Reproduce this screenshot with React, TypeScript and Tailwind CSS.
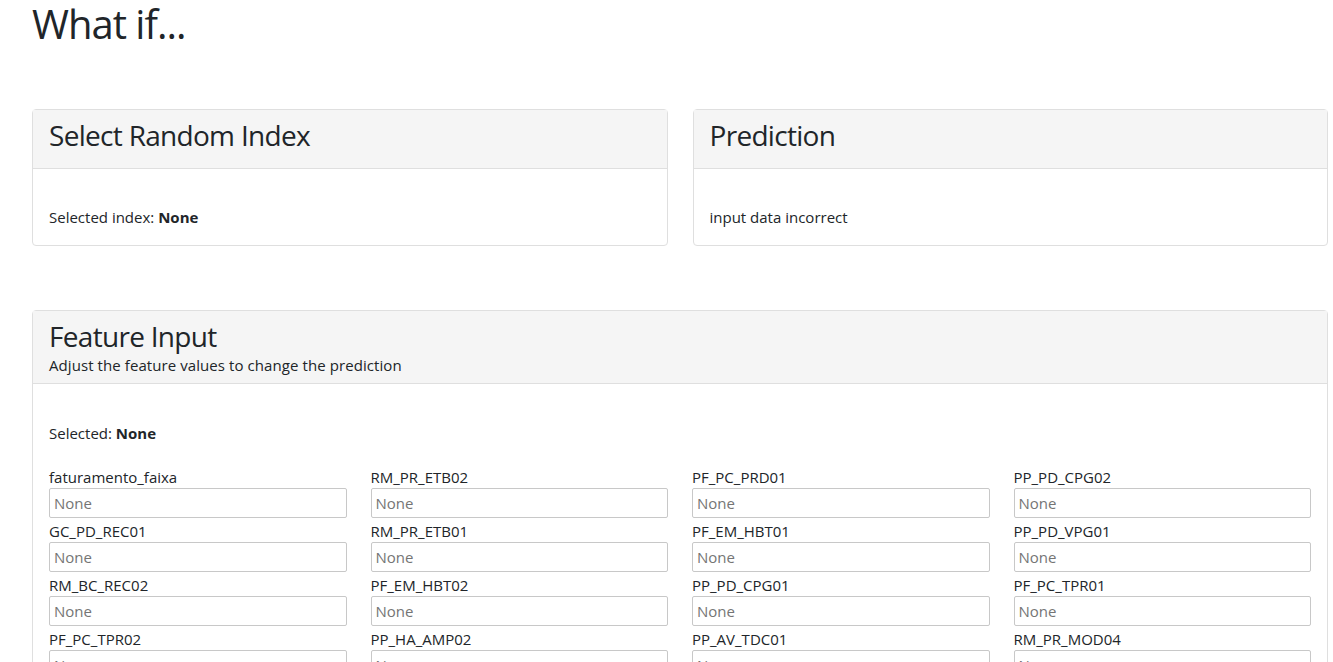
const features = [
  'faturamento_faixa',
  'RM_PR_ETB02',
  'PF_PC_PRD01',
  'PP_PD_CPG02',
  'GC_PD_REC01',
  'RM_PR_ETB01',
  'PF_EM_HBT01',
  'PP_PD_VPG01',
  'RM_BC_REC02',
  'PF_EM_HBT02',
  'PP_PD_CPG01',
  'PF_PC_TPR01',
  'PF_PC_TPR02',
  'PP_HA_AMP02',
  'PP_AV_TDC01',
  'RM_PR_MOD04',
  'RM_PR_MOD01',
  'PF_EM_HBT03',
  'PP_PD_VPG02',
  'GC_PD_REC02',
];

function Card({ title, children }: { title: string; children: React.ReactNode }) {
  return (
    <div className="flex-1 rounded-[4px] border border-[#dfdfdf] bg-white">
      <div className="h-[59px] border-b border-[#dfdfdf] bg-[#f5f5f5] px-4 pt-[8px] text-[28px] leading-[34px] tracking-[-0.7px]">
        {title}
      </div>
      <div className="px-4 pt-[37px] pb-[17px] text-[15px] leading-[22px]">{children}</div>
    </div>
  );
}

export default function App() {
  return (
    <div className="min-h-screen bg-white pr-[5px] pl-[32px] text-[#212529] [font-family:'Open_Sans',sans-serif]">
      <h1 className="text-[40px] leading-[48px] font-normal tracking-[-1px]">What if...</h1>

      <div className="mt-[61px] flex gap-[25px]">
        <Card title="Select Random Index">
          Selected index: <b>None</b>
        </Card>
        <Card title="Prediction">input data incorrect</Card>
      </div>

      <div className="mt-[64px] rounded-[4px] border border-[#dfdfdf] bg-white">
        <div className="h-[73px] border-b border-[#dfdfdf] bg-[#f5f5f5] px-4 pt-[8px]">
          <div className="text-[28px] leading-[34px] tracking-[-0.7px]">Feature Input</div>
          <div className="mt-[2px] text-[15px] leading-[20px] tracking-[0.08px]">
            Adjust the feature values to change the prediction
          </div>
        </div>
        <div className="px-4 pt-[38px] pb-4 text-[15px] leading-[22px]">
          <div>
            Selected: <b>None</b>
          </div>
          <div className="mt-[22px] grid grid-cols-4 gap-x-6">
            {features.map((f) => (
              <div key={f} className="mb-[2px]">
                <div className="h-[22px]">{f}</div>
                <input
                  placeholder="None"
                  className="block h-[30px] w-full rounded-[2px] border border-[#c8c8c8] px-1 text-[15px] placeholder:text-[#757575] focus:outline-none"
                />
              </div>
            ))}
          </div>
        </div>
      </div>
    </div>
  );
}
